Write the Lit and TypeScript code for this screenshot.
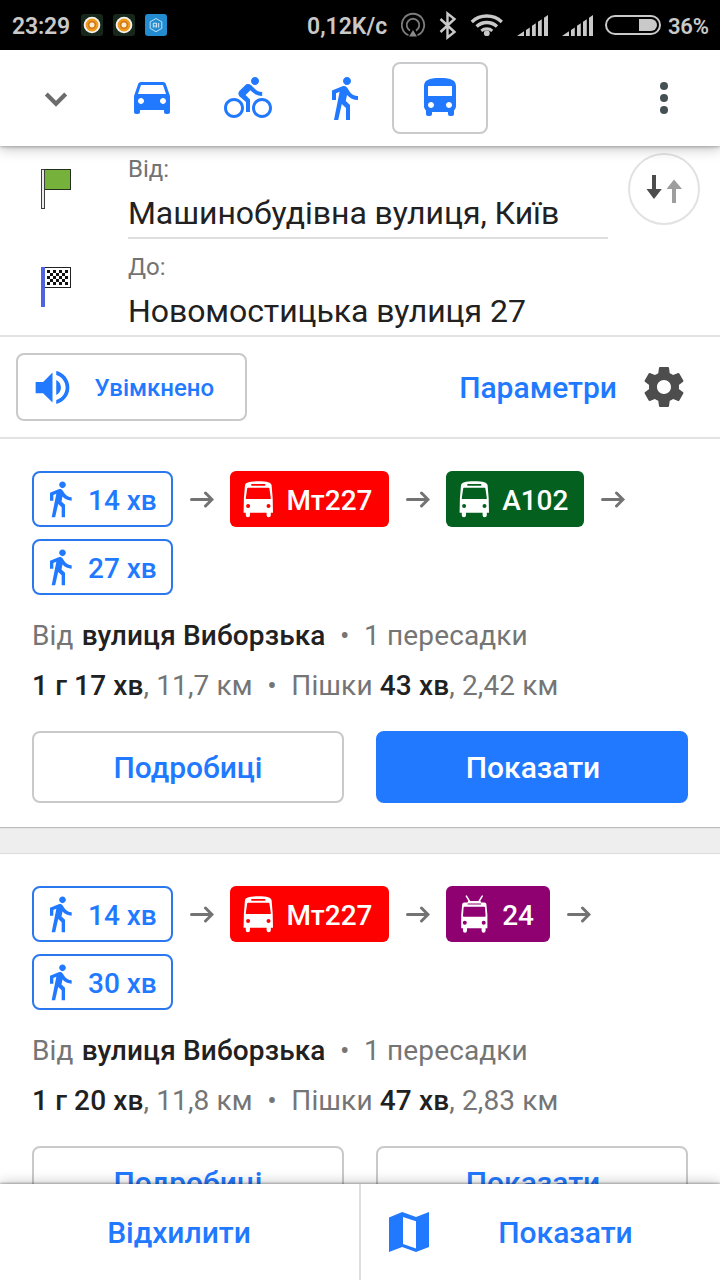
import { LitElement, html, css, svg, nothing } from "lit";
import { customElement, property } from "lit/decorators.js";
import { classMap } from "lit/directives/class-map.js";

const WALK =
  "M13.5 5.5c1.1 0 2-.9 2-2s-.9-2-2-2-2 .9-2 2 .9 2 2 2zM9.8 8.9L7 23h2.1l1.8-8 2.1 2v6h2v-7.5l-2.1-2 .6-3C14.8 12 16.8 13 19 13v-2c-1.9 0-3.5-1-4.3-2.4l-1-1.6c-.4-.6-1-1-1.7-1-.3 0-.5.1-.8.1L6 8.3V13h2V9.6l1.8-.7";
const CAR =
  "M18.92 5.01C18.72 4.42 18.16 4 17.5 4h-11c-.66 0-1.21.42-1.42 1.01L3 11v8c0 .55.45 1 1 1h1c.55 0 1-.45 1-1v-1h12v1c0 .55.45 1 1 1h1c.55 0 1-.45 1-1v-8l-2.08-5.99zM6.5 15c-.83 0-1.5-.67-1.5-1.5S5.67 12 6.5 12s1.5.67 1.5 1.5S7.33 15 6.5 15zm11 0c-.83 0-1.5-.67-1.5-1.5s.67-1.5 1.5-1.5 1.5.67 1.5 1.5-.67 1.5-1.5 1.5zM5 10l1.5-4.5h11L19 10H5z";
const BIKE =
  "M15.5 5.5c1.1 0 2-.9 2-2s-.9-2-2-2-2 .9-2 2 .9 2 2 2zM5 12c-2.8 0-5 2.2-5 5s2.2 5 5 5 5-2.2 5-5-2.2-5-5-5zm0 8.5c-1.9 0-3.5-1.6-3.5-3.5s1.6-3.5 3.5-3.5 3.5 1.6 3.5 3.5-1.6 3.5-3.5 3.5zm5.8-10l2.4-2.4.8.8c1.3 1.3 3 2.1 5.1 2.1V9c-1.5 0-2.7-.6-3.6-1.5l-1.9-1.9c-.5-.4-1-.6-1.6-.6s-1.1.2-1.4.6L7.8 8.4c-.4.4-.6.9-.6 1.4 0 .6.2 1.1.6 1.4L11 14v5h2v-6.2l-2.2-2.3zM19 12c-2.8 0-5 2.2-5 5s2.2 5 5 5 5-2.2 5-5-2.2-5-5-5zm0 8.5c-1.9 0-3.5-1.6-3.5-3.5s1.6-3.5 3.5-3.5 3.5 1.6 3.5 3.5-1.6 3.5-3.5 3.5z";
const BUS =
  "M4 16c0 .88.39 1.67 1 2.22V20c0 .55.45 1 1 1h1c.55 0 1-.45 1-1v-1h8v1c0 .55.45 1 1 1h1c.55 0 1-.45 1-1v-1.78c.61-.55 1-1.34 1-2.22V6c0-3.5-3.58-4-8-4s-8 .5-8 4v10zm3.5 1c-.83 0-1.5-.67-1.5-1.5S6.67 14 7.5 14s1.5.67 1.5 1.5S8.33 17 7.5 17zm9 0c-.83 0-1.5-.67-1.5-1.5s.67-1.5 1.5-1.5 1.5.67 1.5 1.5-.67 1.5-1.5 1.5zm1.5-6H6V6h12v5z";
const VOLUME =
  "M3 9v6h4l5 5V4L7 9H3zm13.5 3c0-1.77-1.02-3.29-2.5-4.03v8.05c1.48-.73 2.5-2.25 2.5-4.02zM14 3.23v2.06c2.89.86 5 3.54 5 6.71s-2.11 5.85-5 6.71v2.06c4.01-.91 7-4.49 7-8.77s-2.99-7.86-7-8.77z";
const GEAR =
  "M19.43 12.98c.04-.32.07-.64.07-.98s-.03-.66-.07-.98l2.11-1.65c.19-.15.24-.42.12-.64l-2-3.46c-.12-.22-.39-.3-.61-.22l-2.49 1c-.52-.4-1.08-.73-1.69-.98l-.38-2.65C14.46 2.18 14.25 2 14 2h-4c-.25 0-.46.18-.49.42l-.38 2.65c-.61.25-1.17.59-1.69.98l-2.49-1c-.23-.09-.49 0-.61.22l-2 3.46c-.13.22-.07.49.12.64l2.11 1.65c-.04.32-.07.65-.07.98s.03.66.07.98l-2.11 1.65c-.19.15-.24.42-.12.64l2 3.46c.12.22.39.3.61.22l2.49-1c.52.4 1.08.73 1.69.98l.38 2.65c.03.24.24.42.49.42h4c.25 0 .46-.18.49-.42l.38-2.65c.61-.25 1.17-.59 1.69-.98l2.49 1c.23.09.49 0 .61-.22l2-3.46c.12-.22.07-.49-.12-.64l-2.11-1.65zM12 15.5c-1.93 0-3.5-1.57-3.5-3.5s1.57-3.5 3.5-3.5 3.5 1.57 3.5 3.5-1.57 3.5-3.5 3.5z";

const icon = (d: string, size: number) => html`
  <svg width=${size} height=${size} viewBox="0 0 24 24" fill="currentColor"><path d=${d} /></svg>
`;

const busFront = html`
  <svg width="36" height="40" viewBox="0 0 36 40" fill="currentColor">
    <path
      fill-rule="evenodd"
      d="M5 6.200C5.600 3.800 9 2.300 18.300 2.300s12.700 1.500 13.300 3.900L32.700 19.500 33 33.700h-2.200v2.500a2.100 2.100 0 0 1-4.200 0v-2.500H10v2.500a2.100 2.100 0 0 1-4.200 0v-2.500H3.600L3.900 19.500zM12 4.900a.9.9 0 0 0 0 1.800h12.600a.9.9 0 0 0 0-1.800zM8.200 8.700a1 1 0 0 0-1 .9L5.800 19a1 1 0 0 0 1 1.100h23a1 1 0 0 0 1-1.100l-1.400-9.400a1 1 0 0 0-1-.9zM8.100 25a2 2 0 1 0 0 4 2 2 0 0 0 0-4zM28.500 25a2 2 0 1 0 0 4 2 2 0 0 0 0-4z"
    />
  </svg>
`;

const trolley = html`
  <svg width="36" height="40" viewBox="0 0 36 40" fill="currentColor">
    <path d="M10.400 2.200l3.600 6M26.200 2.200l-3.600 6" fill="none" stroke="currentColor" stroke-width="1.600" stroke-linecap="round" />
    <path
      fill-rule="evenodd"
      d="M12.200 7h12.200l.8 1.400h3.200a2 2 0 0 1 2 1.800l1 10.600v13.400h-1.800v2.600a2 2 0 0 1-4 0v-2.600H11v2.600a2 2 0 0 1-4 0v-2.600H5.200V20.800L6.200 10.200a2 2 0 0 1 2-1.800h3.200zM11.600 9.500v1h13.400v-1zM8.400 12.700a.8.8 0 0 0-.8.7L7 21.800a.9.9 0 0 0 .9 1h20.800a.9.9 0 0 0 .9-1l-.6-8.400a.8.8 0 0 0-.8-.7zM8.800 26.700a2 2 0 1 0 0 4 2 2 0 0 0 0-4zM27.700 26.700a2 2 0 1 0 0 4 2 2 0 0 0 0-4z"
    />
  </svg>
`;

type LegKind = "walk" | "bus" | "trolley";
interface Leg {
  kind: LegKind;
  text: string;
  tone: "outline" | "red" | "green" | "purple";
}
interface Route {
  legs: Leg[];
  from: string;
  transfers: string;
  time: string;
  distance: string;
  walkTime: string;
  walkDistance: string;
  selected: boolean;
}

const ROUTES: Route[] = [
  {
    legs: [
      { kind: "walk", text: "14 хв", tone: "outline" },
      { kind: "bus", text: "Мт227", tone: "red" },
      { kind: "bus", text: "А102", tone: "green" },
      { kind: "walk", text: "27 хв", tone: "outline" },
    ],
    from: "вулиця Виборзька",
    transfers: "1 пересадки",
    time: "1 г 17 хв",
    distance: "11,7 км",
    walkTime: "43 хв",
    walkDistance: "2,42 км",
    selected: true,
  },
  {
    legs: [
      { kind: "walk", text: "14 хв", tone: "outline" },
      { kind: "bus", text: "Мт227", tone: "red" },
      { kind: "trolley", text: "24", tone: "purple" },
      { kind: "walk", text: "30 хв", tone: "outline" },
    ],
    from: "вулиця Виборзька",
    transfers: "1 пересадки",
    time: "1 г 20 хв",
    distance: "11,8 км",
    walkTime: "47 хв",
    walkDistance: "2,83 км",
    selected: false,
  },
];

@customElement("status-bar")
class StatusBar extends LitElement {
  static styles = css`
    :host {
      display: flex;
      align-items: center;
      height: 50px;
      padding: 0 12px 0 12px;
      background: #000;
      color: #c9c9c9;
      font: 600 23px/50px Roboto, sans-serif;
    }
    svg { display: block; flex: none; }
    .clock { width: 69px; letter-spacing: -0.2px; }
    .apps { display: flex; gap: 10px; flex: 1; }
    .speed { width: 94px; }
    .percent { margin-left: 7px; width: 40px; font-size: 22px; letter-spacing: -0.2px; }
    .clock, .speed, .percent { padding-top: 3px; white-space: nowrap; }
  `;
  private app() {
    return html`<svg width="22" height="22" viewBox="0 0 22 22">
      <rect width="22" height="22" rx="3" fill="#18271c" />
      <circle cx="11" cy="11" r="8.300" fill="#f4f4ee" />
      <circle cx="11" cy="11" r="4.400" fill="none" stroke="#f0971c" stroke-width="4" />
      <circle cx="11" cy="11" r="3.400" fill="none" stroke="#c8781e" stroke-width="1.200" />
      <circle cx="11" cy="11" r="2.300" fill="#f6ead8" />
    </svg>`;
  }
  private signal() {
    return svg`<path d="M0 21L7 16.300V21zM9 21v-6.100l3.800-2.500V21zM15 21V10.800l3.800-2.500V21zM21 21V6.800l3.800-2.500V21zM27 21V2.700L31 0v21z"/>`;
  }
  render() {
    return html`
      <span class="clock">23:29</span>
      <div class="apps">
        ${this.app()} ${this.app()}
        <svg width="22" height="22" viewBox="0 0 22 22">
          <rect width="22" height="22" rx="3" fill="#238bd0" />
          <path d="M11 4.500l5.800 3.300v6.600L11 17.700l-5.800-3.300V7.800z" fill="none" stroke="#bfe2f5" stroke-width="1" />
          <path d="M8.300 13.500V9.200h3.300v4.300M10 11v2.500M13.700 9v4.500" fill="none" stroke="#d8eefa" stroke-width="1" />
        </svg>
      </div>
      <span class="speed">0,12K/c</span>
      <svg width="260" height="50" viewBox="401 0 260 50" fill="#c9c9c9">
        <g fill="none" stroke="#7c7c7c" stroke-width="1.800">
          <path d="M408.500 35.200a11.200 11.200 0 1 1 9 0" />
          <path d="M410 30.600a6.300 6.300 0 1 1 6 0" />
        </g>
        <path d="M413 30l4 6.500h-8z" fill="#8a8a8a" />
        <path d="M440.500 19l14 13-7 5.500v-24l7 5.500-14 13" fill="none" stroke="#c9c9c9" stroke-width="2.400" />
        <g fill="none" stroke="#c9c9c9" stroke-width="3.400">
          <path d="M471.800 21.900a22 22 0 0 1 30 0" />
          <path d="M476.600 26.500a15 15 0 0 1 20.400 0" />
          <path d="M481.300 30.800a8.500 8.500 0 0 1 11 0" stroke-width="3" />
        </g>
        <circle cx="486.800" cy="33.200" r="2.900" />
        <g transform="translate(517 15)">${this.signal()}</g>
        <g transform="translate(562 15)">${this.signal()}</g>
        <rect x="606" y="16" width="54" height="18" rx="9" fill="none" stroke="#c9c9c9" stroke-width="2" />
        <path d="M639 19h12a6 6 0 0 1 0 12h-12z" />
      </svg>
      <span class="percent">36%</span>
    `;
  }
}

@customElement("mode-bar")
class ModeBar extends LitElement {
  static styles = css`
    :host {
      display: flex;
      align-items: center;
      height: 96px;
      background: #fff;
      color: #2179ff;
      box-shadow: 0 1px 3px rgba(0, 0, 0, 0.26), 0 3px 12px rgba(0, 0, 0, 0.24);
      position: relative;
      z-index: 2;
    }
    svg { display: block; }
    .collapse { width: 104px; display: flex; justify-content: center; padding: 2px 0 0 8px; box-sizing: border-box; }
    .mode {
      width: 96px;
      height: 72px;
      box-sizing: border-box;
      display: flex;
      align-items: center;
      justify-content: center;
      border: 2px solid transparent;
      border-radius: 8px;
    }
    .active { border-color: #c9cacb; }
    .more { margin-left: auto; margin-right: 52px; }
  `;
  render() {
    return html`
      <div class="collapse">
        <svg width="24" height="18" viewBox="0 0 24 18"><path d="M2.300 4l9.700 9.700L21.700 4" fill="none" stroke="#6c6c6c" stroke-width="4.200" /></svg>
      </div>
      <div class="mode">${icon(CAR, 48)}</div>
      <div class="mode">${icon(BIKE, 48)}</div>
      <div class="mode">${icon(WALK, 48)}</div>
      <div class="mode active">${icon(BUS, 48)}</div>
      <svg class="more" width="8" height="32" viewBox="0 0 8 32" fill="#455055">
        <circle cx="4" cy="4" r="4" /><circle cx="4" cy="16" r="4" /><circle cx="4" cy="28" r="4" />
      </svg>
    `;
  }
}

@customElement("route-form")
class RouteForm extends LitElement {
  static styles = css`
    :host {
      display: grid;
      grid-template-columns: 480px 1fr;
      padding-left: 128px;
      height: 189px;
      border-bottom: 2px solid #e3e3e3;
      background: #fff;
      position: relative;
      overflow: hidden;
      z-index: 0;
    }
    .field { height: 96px; display: flex; flex-direction: column; box-sizing: border-box; position: relative; }
    .first { height: 93px; padding-top: 6px; border-bottom: 2px solid #dedede; }
    .second { padding-top: 11px; }
    .label { font-size: 24px; line-height: 34px; color: #737373; }
    .value { font-size: 32px; line-height: 54px; color: #212121; white-space: nowrap; letter-spacing: -0.07px; }
    .flag { position: absolute; left: -87px; top: 23px; }
    .second .flag { top: 28px; }
    .swap { justify-self: end; margin: 7px 20px 0 0; }
    svg { display: block; }
  `;
  render() {
    const checks = [];
    for (let r = 0; r < 5; r++)
      for (let c = 0; c < 7; c++) if ((r + c) % 2 === 0) checks.push(svg`<rect x=${6 + c * 3} y=${3 + r * 3} width="3" height="3"/>`);
    return html`
      <div>
        <div class="field first">
          <svg class="flag" width="30" height="40" viewBox="0 0 30 40">
            <rect x="3.500" y=".5" width="26" height="20" fill="#76b13c" stroke="#25301c" />
            <rect x=".5" y=".5" width="3" height="39" fill="#ececec" stroke="#3c3c3c" />
          </svg>
          <span class="label">Від:</span>
          <span class="value">Машинобудівна вулиця, Київ</span>
        </div>
        <div class="field second">
          <svg class="flag" width="30" height="40" viewBox="0 0 30 40">
            <rect x="3.500" y=".5" width="26" height="20" fill="#fff" stroke="#222" />
            <rect width="4" height="40" fill="#4f62e2" />
            <g fill="#111">${checks}</g>
          </svg>
          <span class="label">До:</span>
          <span class="value">Новомостицька вулиця 27</span>
        </div>
      </div>
      <svg class="swap" width="72" height="72" viewBox="0 0 72 72">
        <circle cx="36" cy="36" r="35" fill="#fff" stroke="#e2e2e2" stroke-width="2" />
        <path d="M24 22h4v14h5.800L26 46l-7.500-10H24z" fill="#4c4c4c" />
        <path d="M46 26.500L54 36h-6v14h-4V36h-5.500z" fill="#9e9e9e" />
      </svg>
    `;
  }
}

@customElement("route-card")
class RouteCard extends LitElement {
  @property({ attribute: false }) route!: Route;
  static styles = css`
    :host {
      display: block;
      box-sizing: border-box;
      height: 388px;
      padding: 32px;
      background: #fff;
    }
    svg { display: block; flex: none; }
    .legs { display: flex; flex-wrap: wrap; row-gap: 12px; }
    .leg { display: flex; align-items: center; }
    .chip {
      height: 56px;
      box-sizing: border-box;
      display: flex;
      align-items: center;
      border-radius: 6px;
      color: #fff;
      font-size: 28px;
      font-weight: 500;
      padding: 0 16px 0 10px;
      white-space: nowrap;
    }
    .chip span { margin-left: 10.600px; padding-top: 2px; }
    .outline { border: 2px solid #2b78ee; border-radius: 8px; color: #2179ff; padding: 0 14px 0 6px; }
    .outline span { margin-left: 8px; }
    .red { background: #fe0000; }
    .green { background: #03601e; }
    .purple { background: #8f0071; }
    .arrow { margin: 0 16px 0 17px; }
    .info { font-size: 28px; line-height: 50px; letter-spacing: 0.130px; color: #757575; white-space: nowrap; }
    .summary { padding-top: 16px; }
    b { font-weight: 500; color: #212121; }
    .lead { margin-right: 1px; }
    .dot { padding: 0 14.500px; }
    .actions { display: grid; grid-template-columns: 1fr 1fr; gap: 32px; margin-top: 20px; }
    .button {
      height: 72px;
      box-sizing: border-box;
      border: 2px solid #c9c9c9;
      border-radius: 8px;
      color: #2179ff;
      font-size: 30px;
      font-weight: 500;
      line-height: 70px;
      text-align: center;
    }
    .button + .button { padding-left: 2px; }
    .primary { background: #2179ff; border-color: #2179ff; color: #fff; }
  `;
  private leg(leg: Leg, last: boolean) {
    const glyph = leg.kind === "walk" ? icon(WALK, 40) : leg.kind === "bus" ? busFront : trolley;
    return html`<div class="leg">
      <div class="chip ${leg.tone}">${glyph}<span>${leg.text}</span></div>
      ${last
        ? nothing
        : html`<svg class="arrow" width="24" height="18" viewBox="0 0 24 18">
            <path d="M1.500 9.500h20M15.500 3l6.500 6.500-6.500 6.500" fill="none" stroke="#737373" stroke-width="3" stroke-linecap="round" />
          </svg>`}
    </div>`;
  }
  render() {
    const r = this.route;
    return html`
      <div class="legs">${r.legs.map((l, i) => this.leg(l, i === r.legs.length - 1))}</div>
      <div class="summary">
        <div class="info"><span class="lead">Від </span><b>${r.from}</b><span class="dot">•</span><span>${r.transfers}</span></div>
        <div class="info"><b>${r.time}</b><span>, ${r.distance}</span><span class="dot">•</span><span>Пішки </span><b>${r.walkTime}</b><span>, ${r.walkDistance}</span></div>
      </div>
      <div class="actions">
        <div class="button">Подробиці</div>
        <div class=${classMap({ button: true, primary: r.selected })}>Показати</div>
      </div>
    `;
  }
}

@customElement("app-root")
class AppRoot extends LitElement {
  static styles = css`
    :host {
      display: flex;
      flex-direction: column;
      width: 720px;
      height: 1280px;
      overflow: hidden;
      background: #fff;
      font-family: Roboto, sans-serif;
    }
    status-bar, mode-bar, route-form, .tools, .footer { flex: none; }
    svg { display: block; }
    .tools {
      height: 100px;
      border-bottom: 2px solid #e3e3e3;
      display: flex;
      align-items: center;
      padding: 0 32px 0 16px;
      color: #2179ff;
      font-weight: 500;
    }
    .voice {
      width: 231px;
      height: 68px;
      box-sizing: border-box;
      border: 2px solid #c9c9c9;
      border-radius: 8px;
      display: flex;
      align-items: center;
      padding-left: 12px;
      font-size: 24px;
    }
    .voice span { margin-left: 19.500px; padding-top: 2px; }
    .options { margin-left: auto; font-size: 30px; }
    .gear { margin-left: 23px; color: #4d4d4d; }
    .routes { flex: 1; min-height: 0; overflow: hidden; background: #eee; }
    route-card + route-card { margin-top: 27px; box-shadow: 0 0 0 1px #dcdcdc; }
    .selected { box-shadow: 0 1px 1px #bcbcbc; }
    .footer {
      height: 96px;
      display: flex;
      background: #fff;
      position: relative;
      z-index: 2;
      box-shadow: 0 -1px 2px rgba(0, 0, 0, 0.3), 0 -2px 12px rgba(0, 0, 0, 0.2);
      color: #2179ff;
      font-size: 30px;
      font-weight: 500;
      line-height: 98px;
    }
    .dismiss { width: 358px; padding-right: 1px; text-align: center; border-right: 2px solid #dedede; }
    .show { flex: 1; display: flex; align-items: center; padding-left: 28px; }
    .show span { flex: 1; text-align: center; padding: 1px 18px 0 0; }
  `;
  render() {
    return html`
      <status-bar></status-bar>
      <mode-bar></mode-bar>
      <route-form></route-form>
      <div class="tools">
        <div class="voice">${icon(VOLUME, 45)}<span>Увімкнено</span></div>
        <div class="options">Параметри</div>
        <div class="gear">${icon(GEAR, 48)}</div>
      </div>
      <div class="routes">
        ${ROUTES.map((r) => html`<route-card class=${r.selected ? "selected" : ""} .route=${r}></route-card>`)}
      </div>
      <div class="footer">
        <div class="dismiss">Відхилити</div>
        <div class="show">
          <svg width="40" height="40" viewBox="0 0 40 40" fill="currentColor">
            <path fill-rule="evenodd" d="M0 5.500L13.200 0 27 5 40 0v35l-13 5-13.800-5L0 40zM14 5v27l13 4.500V9.200z" />
          </svg>
          <span>Показати</span>
        </div>
      </div>
    `;
  }
}
